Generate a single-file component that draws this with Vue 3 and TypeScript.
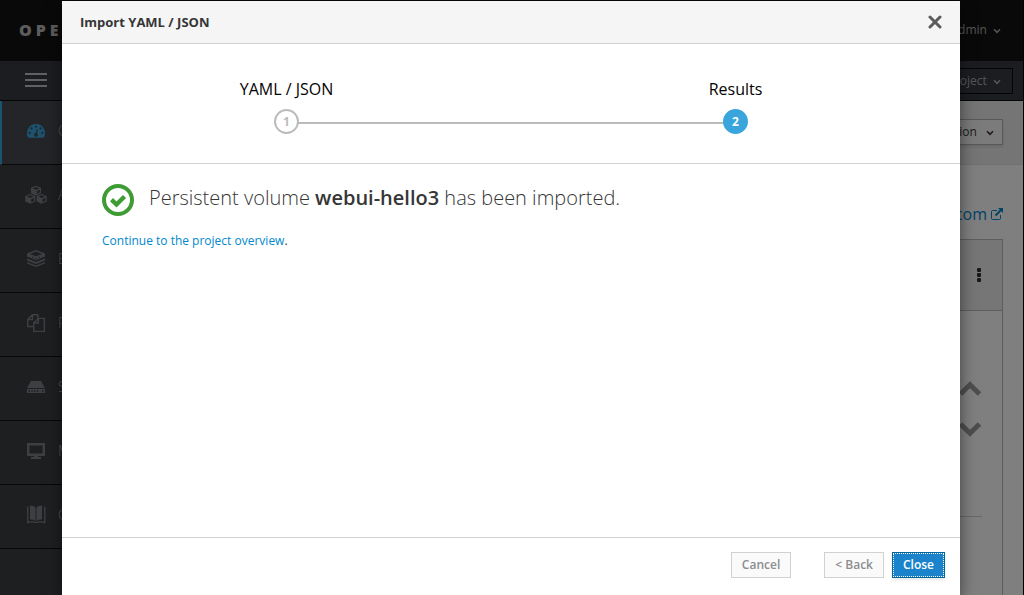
<script setup lang="ts">
import { ref } from 'vue'

interface NavItem { label: string; icon: string }
interface Step { label: string; active: boolean }

const navItems: NavItem[] = [
  { label: 'Overview', icon: 'dashboard' },
  { label: 'Applications', icon: 'cubes' },
  { label: 'Builds', icon: 'layers' },
  { label: 'Resources', icon: 'files' },
  { label: 'Storage', icon: 'drive' },
  { label: 'Monitoring', icon: 'screen' },
  { label: 'Catalog', icon: 'catalog' },
]
const steps: Step[] = [
  { label: 'YAML / JSON', active: false },
  { label: 'Results', active: true },
]
const selected = ref('Overview')
</script>

<template>
  <div class="app">
    <header class="masthead">
      <span class="brand">OPEN</span>
      <button type="button" class="user">admin
        <svg class="caret" viewBox="0 0 8 6"><path d="M1 1.2 4 4.3 7 1.2" /></svg>
      </button>
    </header>
    <div class="project-bar">
      <button type="button" class="burger" aria-label="Toggle navigation"><i></i><i></i><i></i></button>
      <button type="button" class="add">Add to Project
        <svg class="caret" viewBox="0 0 8 6"><path d="M1 1.2 4 4.3 7 1.2" /></svg>
      </button>
    </div>
    <div class="columns">
      <nav class="sidebar">
        <a v-for="item in navItems" :key="item.label" href="#" class="nav-item" :class="{ active: item.label === selected }" @click.prevent="selected = item.label">
          <svg v-if="item.icon === 'dashboard'" width="22" height="22" viewBox="0 0 22 22">
            <path fill="currentColor" fill-rule="evenodd" d="M11 4a9 9 0 0 0-7.6 13.8h15.2A9 9 0 0 0 11 4zM11 5.500a1.100 1.100 0 1 1 0 2.200 1.100 1.100 0 0 1 0-2.200zM6.500 7.300a1.100 1.100 0 1 1 0 2.200 1.100 1.100 0 0 1 0-2.200zM15.500 7.300a1.100 1.100 0 1 1 0 2.200 1.100 1.100 0 0 1 0-2.200zM4.700 11.800a1.100 1.100 0 1 1 0 2.200 1.100 1.100 0 0 1 0-2.200zM17.300 11.800a1.100 1.100 0 1 1 0 2.200 1.100 1.100 0 0 1 0-2.200zM11.600 9l-.8 4a1.900 1.900 0 1 0 1.300.400L12.700 9.300z" />
          </svg>
          <svg v-else-if="item.icon === 'cubes'" width="22" height="22" viewBox="0 0 22 22" fill="currentColor">
            <path fill-rule="evenodd" d="M11 1.700l5 2v5.600l-5 2.200-5-2.200V3.700zM11 3L7.700 4.400 11 5.800l3.300-1.400zM11.800 7v3l3-1.400V5.800z" />
            <path fill-rule="evenodd" d="M5.300 9.900l5 2v5.600l-5 2.200-5-2.200v-5.600zM5.300 11.200L2 12.600 5.300 14l3.300-1.400zM6.100 15.200v3l3-1.400V14z" />
            <path fill-rule="evenodd" d="M16.700 9.900l5 2v5.600l-5 2.200-5-2.200v-5.600zM16.700 11.200l-3.300 1.400 3.300 1.400 3.300-1.400zM17.500 15.200v3l3-1.400V14z" />
          </svg>
          <svg v-else-if="item.icon === 'layers'" width="22" height="22" viewBox="0 0 22 22" fill="currentColor">
            <path fill-rule="evenodd" d="M11 2l9 3.500v3L11 12 2 8.500v-3zM11 3.500L5 6l6 2.300L17 6zM7 8.500v1l1.500.6v-1zM10.200 9.700v1h1.600v-1zM13.500 9.100v1l1.500-.6v-1z" />
            <path d="M2 10.500l9 3.600 9-3.600v2L11 16l-9-3.500z" />
            <path d="M2 14l9 3.600 9-3.600v1.600L11 19l-9-3.400z" />
          </svg>
          <svg v-else-if="item.icon === 'files'" width="22" height="22" viewBox="0 0 22 22" fill="none" stroke="currentColor" stroke-width="1.4">
            <path d="M8.500 14.500H2.700V7.500L7.500 2.700h5.300v3.500M7.500 2.700v4.800H2.700M8.700 11L13.300 6.400h6v13H8.700zM13.300 6.400V11H8.700" />
          </svg>
          <svg v-else-if="item.icon === 'drive'" width="22" height="22" viewBox="0 0 22 22">
            <path fill="currentColor" fill-rule="evenodd" d="M6 5h10l4 7H2zM2 13h18v4H2zM3.500 14.200v1.600H5v-1.600zM6.300 14.200v1.600h1.500v-1.600zM9 14.200v1.600h1.500v-1.600zM11.800 14.200v1.600h1.500v-1.600zM17 14.200v1.600h1.500v-1.600z" />
          </svg>
          <svg v-else-if="item.icon === 'screen'" width="22" height="22" viewBox="0 0 22 22">
            <path fill="currentColor" fill-rule="evenodd" d="M2 3h18v13H2zM4.500 5.500v8h13v-8zM9 16h4v1h3v2H6v-2h3z" />
          </svg>
          <svg v-else width="22" height="22" viewBox="0 0 22 22">
            <path fill="currentColor" d="M5 1.500c2.500 0 4.300.8 5.500 2V17c-1.500-1-3.300-1.400-5.500-1.400zM17 1.500c-2.500 0-4.300.8-5.500 2V17c1.500-1 3.300-1.400 5.500-1.400z" />
            <path fill="none" stroke="currentColor" stroke-width="1.300" d="M2.700 2.500v16c3-.8 6-.8 8.300 0 2.300-.8 5.300-.8 8.800 0v-16" />
          </svg>
          <span>{{ item.label }}</span>
        </a>
      </nav>
      <main class="content">
        <div class="toolbar">
          <button type="button" class="list-by">Application
            <svg class="caret" viewBox="0 0 8 6"><path d="M1 1.200 4 4.300 7 1.200" /></svg>
          </button>
        </div>
        <div class="route">
          <a href="#">.com
            <svg width="12" height="12" viewBox="0 0 12 12" fill="none" stroke="currentColor">
              <path d="M6 2.500H1.500A1 1 0 0 0 .500 3.500v7a1 1 0 0 0 1 1h7a1 1 0 0 0 1-1V7" />
              <path stroke-width="2" d="M4.500 7.500L10 2" /><path fill="currentColor" stroke="none" d="M7 0h5v5z" />
            </svg>
          </a>
        </div>
        <section class="panel">
          <div class="panel-head">
            <button type="button" class="kebab" aria-label="Actions"><i></i><i></i><i></i></button>
          </div>
          <div class="panel-body">
            <div class="scaler">
              <button type="button" aria-label="Scale up"><svg width="24" height="16" viewBox="0 0 24 16"><path d="M2.500 13L12 3.800 21.500 13" /></svg></button>
              <button type="button" aria-label="Scale down"><svg width="24" height="16" viewBox="0 0 24 16"><path d="M2.500 3L12 12.200 21.500 3" /></svg></button>
            </div>
          </div>
        </section>
      </main>
    </div>

    <div class="backdrop">
      <section class="modal" role="dialog" aria-modal="true" aria-labelledby="wizard-title">
        <header class="modal-head">
          <h1 id="wizard-title">Import YAML / JSON</h1>
          <button type="button" class="dismiss" aria-label="Dismiss">
            <svg width="14" height="14" viewBox="0 0 14 14"><path d="M2 2l10 10M12 2L2 12" /></svg>
          </button>
        </header>
        <ol class="steps">
          <li v-for="(step, i) in steps" :key="step.label" :class="{ active: step.active }">
            <span class="step-label">{{ step.label }}</span>
            <span class="step-number">{{ i + 1 }}</span>
          </li>
        </ol>
        <div class="modal-body">
          <div class="result">
            <svg width="32" height="32" viewBox="0 0 32 32" fill="none" stroke="#3f9c35">
              <circle cx="16" cy="16" r="14" stroke-width="4" />
              <path d="M9.500 15.700l5 4.800 8-8" stroke-width="4.400" />
            </svg>
            <h2>Persistent volume <strong>webui-hello3</strong> has been imported.</h2>
          </div>
          <p><a href="#">Continue to the project overview</a>.</p>
        </div>
        <footer class="modal-foot">
          <button type="button" class="btn cancel" disabled>Cancel</button>
          <button type="button" class="btn" disabled>&lt; Back</button>
          <button type="button" class="btn primary">Close</button>
        </footer>
      </section>
    </div>
  </div>
</template>

<style>
body { margin: 0; background: #000; }
</style>

<style scoped>
.app {
  box-sizing: border-box;
  display: flex;
  flex-direction: column;
  height: 100vh;
  overflow: hidden;
  position: relative;
  border-right: 1px solid #000;
  font: 12px/20px "Open Sans", sans-serif;
  color: #363636;
}
button { font: inherit; color: inherit; margin: 0; padding: 0; border: 0; background: none; }
svg { flex: none; display: block; }
.caret { display: inline-block; width: 8px; height: 6px; margin-left: 3px; fill: none; stroke: currentColor; stroke-width: 1.5; }
.masthead {
  box-sizing: border-box;
  display: flex;
  align-items: center;
  justify-content: space-between;
  flex: none;
  height: 61px;
  padding: 0 22px 2px 19px;
  background: #121212;
}
.brand { font-size: 16px; font-weight: 800; letter-spacing: 4px; color: #bbb; }
.user { color: #aaa; }
.project-bar {
  box-sizing: border-box;
  display: flex;
  align-items: center;
  justify-content: space-between;
  flex: none;
  height: 40px;
  padding: 0 10px 0 25px;
  background: #393b42;
  border-bottom: 1px solid #0c0c0e;
}
.burger { display: flex; flex-direction: column; gap: 4px; width: 22px; padding-bottom: 1px; }
.burger i { height: 2px; background: #c2c2c2; }
.add { height: 26px; padding: 0 11px; border: 1px solid #080808; color: #aaa; }
.columns { display: flex; flex: 1; min-height: 0; }
.sidebar { width: 200px; flex: none; background: #3b3e43; }
.nav-item {
  box-sizing: border-box;
  display: flex;
  align-items: center;
  gap: 11px;
  height: 64px;
  padding: 0 0 3px 25px;
  border-bottom: 1px solid #101113;
  font-size: 14px;
  font-weight: 300;
  color: #7c7e84;
  text-decoration: none;
}
.nav-item span { color: #b4b4b8; }
.nav-item.active { padding-left: 23px; border-left: 2px solid #39a5dc; background: #474b53; color: #39a5dc; }
.content { display: flex; flex-direction: column; flex: 1; min-width: 0; background: #fff; }
.toolbar { display: flex; justify-content: flex-end; padding: 18px 20px 19px; border-bottom: 1px solid #e0e0e0; background: #ebebeb; }
.list-by { height: 26px; padding: 0 8px; border: 1px solid #b0b0b0; background: #f6f6f6; box-shadow: 0 2px 3px rgba(3, 3, 3, 0.1); }
.list-by .caret { margin-left: 6px; }
.route { display: flex; justify-content: flex-end; padding: 39px 20px 15px; }
.route a { display: flex; align-items: center; gap: 4px; font-size: 16px; color: #0088ce; text-decoration: none; }
.panel { display: flex; flex-direction: column; flex: 1; margin: 0 20px; border: 1px solid #bbb; border-bottom: 0; }
.panel-head { display: flex; align-items: center; justify-content: flex-end; height: 70px; padding-right: 21px; border-bottom: 1px solid #bbb; background: #ededed; }
.kebab { display: flex; flex-direction: column; gap: 1px; }
.kebab i { width: 4px; height: 4px; border-radius: 1px; background: #333; }
.panel-body { margin: 0 20px; padding: 70px 0 79px; border-bottom: 1px solid #d1d1d1; }
.scaler { display: flex; flex-direction: column; align-items: flex-end; gap: 24px; }
.scaler path { fill: none; stroke: #9c9c9c; stroke-width: 5; }

.backdrop { position: absolute; inset: 0; display: flex; justify-content: center; padding: 1px 63px 0 62px; background: rgba(0, 0, 0, 0.5); }
.modal { display: flex; flex-direction: column; flex: 1; max-width: 898px; background: #fff; box-shadow: 0 5px 15px rgba(0, 0, 0, 0.5); }
.modal-head { display: flex; align-items: center; justify-content: space-between; padding: 11px 18px; border-bottom: 1px solid #d1d1d1; background: #f5f5f5; }
h1 { margin: 0; font-size: 13px; line-height: 20px; font-weight: 700; }
.dismiss path { stroke: #5c5c5c; stroke-width: 3; stroke-linecap: round; }
.steps { display: flex; margin: 0; padding: 32px 0 29px; border-bottom: 1px solid #d1d1d1; list-style: none; }
.steps li { position: relative; display: flex; flex: 1; flex-direction: column; align-items: center; gap: 7px; }
.steps li:first-child::before { content: ""; position: absolute; bottom: 10px; left: 50%; width: 100%; height: 2px; background: #bbb; }
.step-label { font-size: 16px; line-height: 26px; color: #030303; }
.step-number {
  box-sizing: border-box;
  position: relative;
  width: 25px;
  height: 25px;
  border: 2px solid #bbb;
  border-radius: 50%;
  background: #fff;
  color: #bbb;
  font-weight: 700;
  line-height: 21px;
  text-align: center;
}
.active .step-number { border-color: #39a5dc; background: #39a5dc; color: #fff; }
.modal-body { flex: 1; padding: 20px 40px; }
.result { display: flex; align-items: center; gap: 15px; }
h2 { margin: 0; padding-bottom: 4px; font-size: 20px; line-height: 28px; font-weight: 300; }
h2 strong { font-weight: 600; }
p { margin: 15px 0 0; }
p a { color: #0088ce; text-decoration: none; }
.modal-foot { display: flex; justify-content: flex-end; gap: 8px; padding: 14px 15px 17px; border-top: 1px solid #d1d1d1; }
.btn { height: 26px; padding: 0 10px; border: 1px solid #d1d1d1; background: #fafafa; color: #8b8d8f; font-weight: 600; }
.cancel { margin-right: 25px; }
.primary { border-color: #00659c; background: #1a83cb; color: #fff; outline: 1px dotted #fff; outline-offset: -2px; box-shadow: 0 2px 3px rgba(3, 3, 3, 0.1); }
</style>
